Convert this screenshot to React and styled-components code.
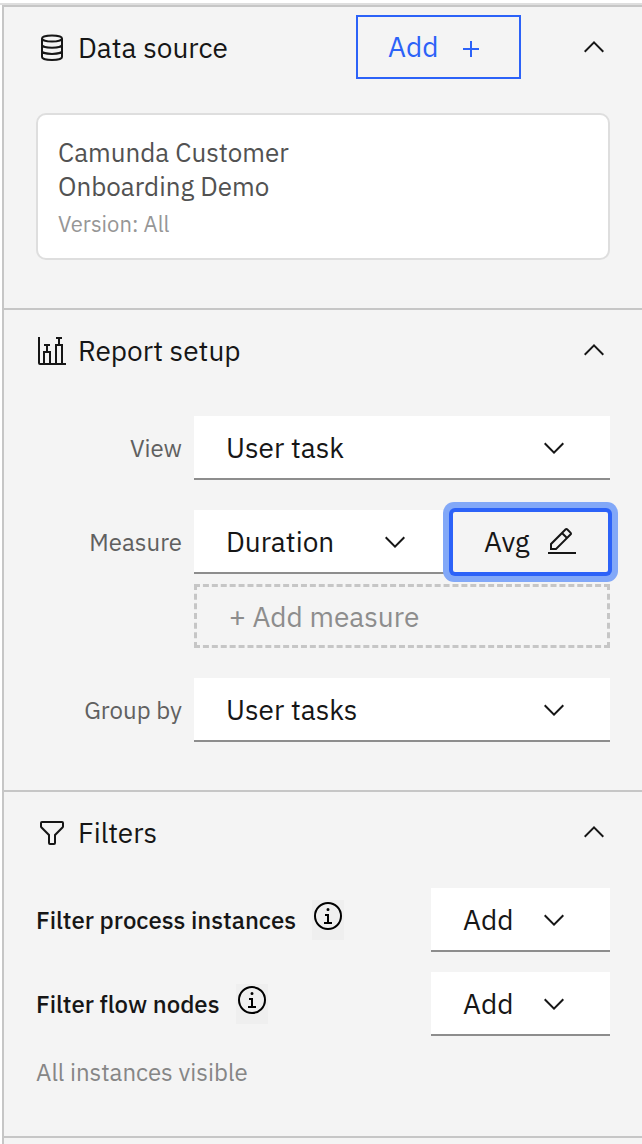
import React from "react";
import styled, { createGlobalStyle } from "styled-components";

const GlobalStyle = createGlobalStyle`
  * { box-sizing: border-box; }
  body {
    margin: 0;
    background: #fff;
    color: #161616;
    font-family: "IBM Plex Sans", "Noto Sans", sans-serif;
    font-size: 28px;
    line-height: 36px;
  }
  button, select { font: inherit; color: inherit; margin: 0; border-radius: 0; }
`;

const Page = styled.div`
  min-height: 100vh;
  display: flex;
  flex-direction: column;
`;

const TopBar = styled.header`
  height: 5px;
  border-bottom: 2px solid #dedede;
`;

const Panel = styled.aside`
  flex: 1;
  margin-left: 2px;
  border-left: 2px solid #c6c6c6;
  background: #f4f4f4;
`;

const Section = styled.section`
  border-top: 2px solid #c6c6c6;
  padding: 8px 32px 48px;

  &:empty { padding: 0; }
`;

const SectionHeader = styled.div`
  display: flex;
  align-items: center;
  height: 64px;
  margin-bottom: ${(p) => p.$gap}px;
`;

const Title = styled.h2`
  flex: 1;
  display: flex;
  align-items: center;
  gap: 10px;
  margin: 0;
  padding-top: 2px;
  font-size: 28px;
  font-weight: 400;
`;

const Icon = styled.svg`
  display: block;
  flex: none;
  width: 32px;
  height: 32px;
  fill: currentColor;
`;

const LineIcon = styled(Icon)`
  fill: none;
  stroke: currentColor;
  stroke-width: 2;
`;

const IconButton = styled.button`
  display: block;
  padding: 0;
  border: 0;
  background: none;
`;

const InfoButton = styled(IconButton)`
  padding-bottom: 8px;
  background: #efefef;
  color: #000;
`;

const OutlineButton = styled.button`
  display: flex;
  align-items: center;
  justify-content: space-between;
  width: 165px;
  height: 64px;
  margin-right: 57px;
  padding: 0 32px 0 30px;
  border: 2px solid #2c62f8;
  background: none;
  color: #2c62f8;

  svg { margin-top: 4px; }
`;

const SourceCard = styled.article`
  padding: 20px 20px 18px;
  border: 2px solid #dedede;
  border-radius: 10px;
  background: #fff;
`;

const SourceName = styled.h3`
  max-width: 260px;
  margin: 0;
  color: #525252;
  font-size: 26px;
  font-weight: 400;
  line-height: 34px;
`;

const SourceVersion = styled.p`
  margin: 0;
  padding-top: 5px;
  color: #969696;
  font-size: 22px;
  line-height: 32px;
`;

const SetupGrid = styled.div`
  display: grid;
  grid-template-columns: 146px 1fr;
  column-gap: 12px;
  row-gap: 30px;
`;

const FieldLabel = styled.label`
  color: #606060;
  font-size: 24px;
  line-height: 64px;
  text-align: right;
`;

const MeasureFields = styled.div`
  display: grid;
  row-gap: 10px;
`;

const MeasureRow = styled.div`
  display: flex;
`;

const SelectBox = styled.div`
  position: relative;
  flex: ${(p) => (p.$width ? "none" : "1")};
  width: ${(p) => (p.$width ? `${p.$width}px` : "auto")};

  svg {
    position: absolute;
    top: 16px;
    right: 40px;
    pointer-events: none;
  }
`;

const NativeSelect = styled.select`
  appearance: none;
  display: block;
  width: 100%;
  height: 64px;
  padding: 2px 72px 0 32px;
  border: 0;
  border-bottom: 2px solid #8d8d8d;
  background: #fff;
`;

const AggregateButton = styled.button`
  position: relative;
  display: flex;
  align-items: center;
  justify-content: space-between;
  width: 159px;
  height: 64px;
  padding: 0 30px 0 31px;
  border: 2px solid #2c62f8;
  border-radius: 4px;
  background: #f4f4f4;
  box-shadow: 0 0 0 2px #2c62f8, 0 0 0 8px #82a8f8;
`;

const AddMeasureButton = styled.button`
  height: 64px;
  padding: 2px 32px 0;
  border: 3px dashed #c6c6c6;
  background: none;
  color: #8d8d8d;
  text-align: left;
`;

const FilterRow = styled.div`
  display: flex;
  align-items: center;
  gap: 16px;
  margin-bottom: 20px;
`;

const FilterLabel = styled.label`
  font-size: 24px;
  font-weight: 500;
`;

const Spacer = styled.span`
  flex: 1;
`;

const Note = styled.p`
  margin: 0;
  color: #868686;
  font-size: 24px;
  line-height: 32px;
`;

const ChevronDown = () => (
  <Icon viewBox="0 0 16 16" aria-hidden="true">
    <path d="M8 11L3 6l.7-.7L8 9.6l4.3-4.3.7.7z" />
  </Icon>
);

const CollapseButton = ({ label }) => (
  <IconButton type="button" aria-label={label} aria-expanded="true">
    <Icon viewBox="0 0 16 16" aria-hidden="true">
      <path d="M8 5l5 5-.7.7L8 6.4l-4.3 4.3L3 10z" />
    </Icon>
  </IconButton>
);

const DatabaseIcon = () => (
  <LineIcon viewBox="0 0 32 32" aria-hidden="true">
    <ellipse cx="16" cy="6.5" rx="10" ry="3" />
    <path d="M6 6.5V25c0 1.7 4.5 3 10 3s10-1.3 10-3V6.5M6 12.7c0 1.7 4.5 3 10 3s10-1.3 10-3M6 18.9c0 1.7 4.5 3 10 3s10-1.3 10-3" />
  </LineIcon>
);

const ReportIcon = () => (
  <LineIcon viewBox="0 0 32 32" aria-hidden="true">
    <path d="M3 2v26q0 1 1 1h26M8 29V17h6v12M11 17v-7M8 10h6M20 29V10h6v19M23 10V3M20 3h6" />
  </LineIcon>
);

const FilterIcon = () => (
  <Icon viewBox="0 0 32 32" aria-hidden="true">
    <path d="M18 28h-4a2 2 0 0 1-2-2v-7.59L4.59 11A2 2 0 0 1 4 9.59V6a2 2 0 0 1 2-2h20a2 2 0 0 1 2 2v3.59a2 2 0 0 1-.59 1.41L20 18.41V26a2 2 0 0 1-2 2zM6 6v3.59l8 8V26h4v-8.41l8-8V6z" />
  </Icon>
);

const PlusIcon = () => (
  <Icon viewBox="0 0 32 32" aria-hidden="true">
    <path d="M17 15V8h-2v7H8v2h7v7h2v-7h7v-2z" />
  </Icon>
);

const EditIcon = () => (
  <Icon viewBox="0 0 32 32" aria-hidden="true">
    <path d="M2 26h28v2H2zM25.4 9c.8-.8.8-2 0-2.8l-3.6-3.6c-.8-.8-2-.8-2.8 0l-15 15V24h6.4l15-15zm-5-5L24 7.6l-3 3L17.4 7l3-3zM6 22v-3.6l10-10 3.6 3.6-10 10H6z" />
  </Icon>
);

const InfoIcon = () => (
  <Icon viewBox="0 0 32 32" aria-hidden="true">
    <path d="M17 22v-8h-4v2h2v6h-3v2h8v-2zM16 8a1.5 1.5 0 1 0 1.5 1.5A1.5 1.5 0 0 0 16 8z" />
    <path d="M16 30a14 14 0 1 1 14-14 14 14 0 0 1-14 14zm0-26a12 12 0 1 0 12 12A12 12 0 0 0 16 4z" />
  </Icon>
);

const Select = ({ id, value, width }) => (
  <SelectBox $width={width}>
    <NativeSelect id={id} defaultValue={value}>
      <option>{value}</option>
    </NativeSelect>
    <ChevronDown />
  </SelectBox>
);

const Filter = ({ id, label }) => (
  <FilterRow>
    <FilterLabel htmlFor={id}>{label}</FilterLabel>
    <InfoButton type="button" aria-label={`About: ${label}`}>
      <InfoIcon />
    </InfoButton>
    <Spacer />
    <Select id={id} value="Add" width={179} />
  </FilterRow>
);

export default function App() {
  return (
    <Page>
      <GlobalStyle />
      <TopBar />
      <Panel>
        <Section>
          <SectionHeader $gap={34}>
            <Title><DatabaseIcon />Data source</Title>
            <OutlineButton type="button">Add<PlusIcon /></OutlineButton>
            <CollapseButton label="Collapse data source" />
          </SectionHeader>
          <SourceCard>
            <SourceName>Camunda Customer Onboarding Demo</SourceName>
            <SourceVersion>Version: All</SourceVersion>
          </SourceCard>
        </Section>

        <Section>
          <SectionHeader $gap={34}>
            <Title><ReportIcon />Report setup</Title>
            <CollapseButton label="Collapse report setup" />
          </SectionHeader>
          <SetupGrid>
            <FieldLabel htmlFor="view">View</FieldLabel>
            <Select id="view" value="User task" />
            <FieldLabel htmlFor="measure">Measure</FieldLabel>
            <MeasureFields>
              <MeasureRow>
                <Select id="measure" value="Duration" />
                <AggregateButton type="button">Avg<EditIcon /></AggregateButton>
              </MeasureRow>
              <AddMeasureButton type="button">+ Add measure</AddMeasureButton>
            </MeasureFields>
            <FieldLabel htmlFor="group">Group by</FieldLabel>
            <Select id="group" value="User tasks" />
          </SetupGrid>
        </Section>

        <Section>
          <SectionHeader $gap={24}>
            <Title><FilterIcon />Filters</Title>
            <CollapseButton label="Collapse filters" />
          </SectionHeader>
          <Filter id="filter-instances" label="Filter process instances" />
          <Filter id="filter-nodes" label="Filter flow nodes" />
          <Note>All instances visible</Note>
        </Section>

        <Section />
      </Panel>
    </Page>
  );
}
